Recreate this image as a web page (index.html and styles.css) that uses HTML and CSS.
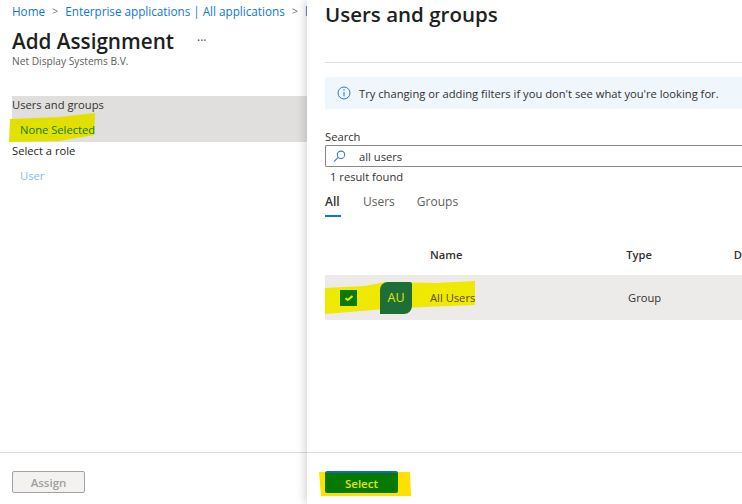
FILE: index.html
```html
<!DOCTYPE html>
<html lang="en">
<head>
<meta charset="utf-8">
<title>Add Assignment</title>
<link rel="stylesheet" href="styles.css">
</head>
<body>
<div class="page">
  <section class="left">
    <nav class="crumbs"><a>Home</a><span class="sep">&gt;</span><a>Enterprise applications | All applications</a><span class="sep">&gt;</span><a>l</a></nav>
    <div class="title-row"><h1>Add Assignment</h1><span class="dots">···</span></div>
    <p class="org">Net Display Systems B.V.</p>
    <div class="picked">
      <div class="picked-label">Users and groups</div>
      <div class="picked-value">
        <svg class="marker marker-none" viewBox="0 0 87 29" preserveAspectRatio="none"><path d="M1 6 L50 4 L86 0 L85 22 L50 28 L0 29 Z" fill="#e2e000"/></svg>
        <span class="on-marker">None Selected</span>
      </div>
    </div>
    <div class="role-label">Select a role</div>
    <div class="role-value">User</div>
    <footer class="foot"><button class="btn-assign">Assign</button></footer>
  </section>
  <section class="right">
    <h2>Users and groups</h2>
    <hr class="rule">
    <div class="info">
      <svg class="info-icon" viewBox="0 0 14 14"><circle cx="7" cy="7" r="6" fill="none" stroke="#2b7cd3" stroke-width="1"/><path d="M7 6v4.2" stroke="#2b7cd3" stroke-width="1.1"/><circle cx="7" cy="4.1" r=".75" fill="#2b7cd3"/></svg>
      <span>Try changing or adding filters if you don't see what you're looking for.</span>
    </div>
    <label class="search-label">Search</label>
    <div class="search">
      <svg class="search-icon" viewBox="0 0 14 14"><circle cx="8.6" cy="5.2" r="4" fill="none" stroke="#2b7cd3" stroke-width="1.1"/><path d="M5.7 8 L1 12.6" stroke="#2b7cd3" stroke-width="1.2"/></svg>
      <span>all users</span>
    </div>
    <div class="count">1 result found</div>
    <div class="tabs"><span class="tab active">All</span><span class="tab">Users</span><span class="tab">Groups</span></div>
    <div class="thead"><span class="c-name">Name</span><span class="c-type">Type</span><span class="c-d">D</span></div>
    <div class="row">
      <svg class="marker marker-row" viewBox="0 0 150 33" preserveAspectRatio="none"><path d="M0 7 L40 5 L60 1 L110 2 L150 0 L150 24 L100 26 L60 28 L0 33 Z" fill="#efe800"/></svg>
      <span class="check"><svg viewBox="0 0 10 8"><path d="M1.5 4.2 L3.8 6 L8.5 2" fill="none" stroke="#f0ea00" stroke-width="2"/></svg></span>
      <span class="avatar">AU</span>
      <span class="r-name">All Users</span>
      <span class="r-type">Group</span>
    </div>
    <footer class="foot foot-right">
      <svg class="marker marker-select" viewBox="0 0 93 25" preserveAspectRatio="none"><path d="M1 0 H92 L93 24 H3 Z" fill="#ffe100"/></svg>
      <button class="btn-select">Select</button>
    </footer>
  </section>
</div>
</body>
</html>
```
FILE: styles.css
```css
* { box-sizing: border-box; }
html, body { margin: 0; height: 100%; }
body { background: #fff; font-family: "Open Sans", "Noto Sans", sans-serif; color: #323130; font-size: 11.2px; overflow: hidden; }
.page { display: flex; width: 742px; height: 504px; }
.left { width: 307px; flex: none; position: relative; overflow: hidden; padding-top: 2px; }
.crumbs { display: flex; align-items: center; height: 17px; padding-left: 12px; white-space: nowrap; color: #0f78d4; font-size: 11.7px; }
.sep { color: #777; margin: 0 7px; font-size: 11px; }
.title-row { display: flex; align-items: center; padding: 6px 0 0 12px; height: 35px; padding-top: 8px; }
h1 { margin: 0; font-size: 20.7px; font-weight: 600; color: #201f1e; line-height: 28px; }
.dots { margin-left: 23px; font-size: 12px; color: #444; }
.org { margin: 0 0 0 12px; font-size: 10.2px; line-height: 14px; color: #605e5c; }
.picked { margin: 28px 0 0 12px; height: 46px; background: #e1dfdd; }
.picked-label { height: 18px; line-height: 18px; color: #323130; }
.picked-value { position: relative; padding: 7px 0 0 8px; line-height: 18px; }
.on-marker { position: relative; color: #107c10; }
.marker { position: absolute; display: block; }
.marker-none { left: -3px; top: -1px; width: 87px; height: 29px; }
.role-label { margin: 0 0 0 12px; height: 18px; line-height: 18px; color: #201f1e; }
.role-value { margin: 7px 0 0 20px; line-height: 18px; color: #85bde8; }
.foot { position: absolute; left: 0; right: 0; top: 452px; height: 52px; border-top: 1px solid #dcdcdc; padding: 18px 0 0 12px; }
.btn-assign { display: block; width: 73px; height: 22px; padding: 0; border: 1px solid #a3a3a3; border-radius: 2px; background: #f3f2f1; color: #a19f9d; font: 600 11.5px "Open Sans", sans-serif; }
.right { flex: 1; position: relative; overflow: hidden; padding: 0 0 0 18px; box-shadow: -3px 0 8px rgba(0,0,0,.14); background: #fff; }
h2 { margin: 0; height: 62px; font-size: 20.5px; line-height: 29px; font-weight: 600; color: #201f1e; }
.rule { margin: 0; border: 0; border-top: 1px solid #dcdcdc; }
.info { display: flex; align-items: center; height: 32px; margin-top: 14px; padding-left: 12px; background: #eff6fc; white-space: nowrap; }
.info-icon { width: 14px; height: 14px; margin-right: 8px; flex: none; }
.search-label { display: block; margin-top: 20px; height: 16px; line-height: 16px; }
.search { display: flex; align-items: center; height: 22px; padding-top: 1px; border: 1px solid #8a8886; border-right: 0; border-radius: 2px 0 0 2px; padding-left: 7px; color: #323130; }
.search-icon { width: 13px; height: 13px; margin-right: 13px; flex: none; }
.count { margin: 1px 0 0 5px; height: 17px; line-height: 17px; color: #323130; }
.tabs { display: flex; gap: 22px; height: 31px; margin-top: 6px; padding-top: 1px; font-size: 12px; }
.tab { line-height: 18px; color: #605e5c; height: 30px; padding-top: 1px; }
.tab.active { color: #323130; font-weight: 600; width: 16px; border-bottom: 2px solid #0f78d4; height: 25px; }
.thead { display: flex; align-items: center; height: 28px; margin-top: 18px; margin-bottom: 7px; font-weight: 600; white-space: nowrap; }
.c-name { margin-left: 105px; width: 199px; color: #323130; }
.c-type { width: 109px; }
.row { position: relative; display: flex; align-items: center; height: 45px; background: #ecebe9; }
.marker-row { left: 0; top: 6px; width: 150px; height: 33px; }
.check { position: relative; display: flex; align-items: center; justify-content: center; width: 17px; height: 16px; margin-left: 15px; background: #0b7a0b; }
.check svg { width: 10px; height: 8px; }
.avatar { position: relative; display: flex; align-items: center; justify-content: center; width: 32px; height: 32px; margin-left: 23px; border-radius: 8px 2px 8px 0; background: #1e6e37; color: #e6e600; font-size: 12.5px; }
.r-name { position: relative; margin-left: 18px; width: 198px; color: #5a4a10; }
.r-type { color: #323130; }
.foot-right { left: 0; padding-left: 18px; }
.btn-select { position: relative; display: block; width: 73px; height: 22px; padding: 0; border: 0; border-top: 2px solid #0f6cbd; border-radius: 2px; background: #067a00; color: #e6e600; font: 600 11.5px "Open Sans", sans-serif; }
.marker-select { left: 11px; top: 19px; width: 93px; height: 25px; }
```
